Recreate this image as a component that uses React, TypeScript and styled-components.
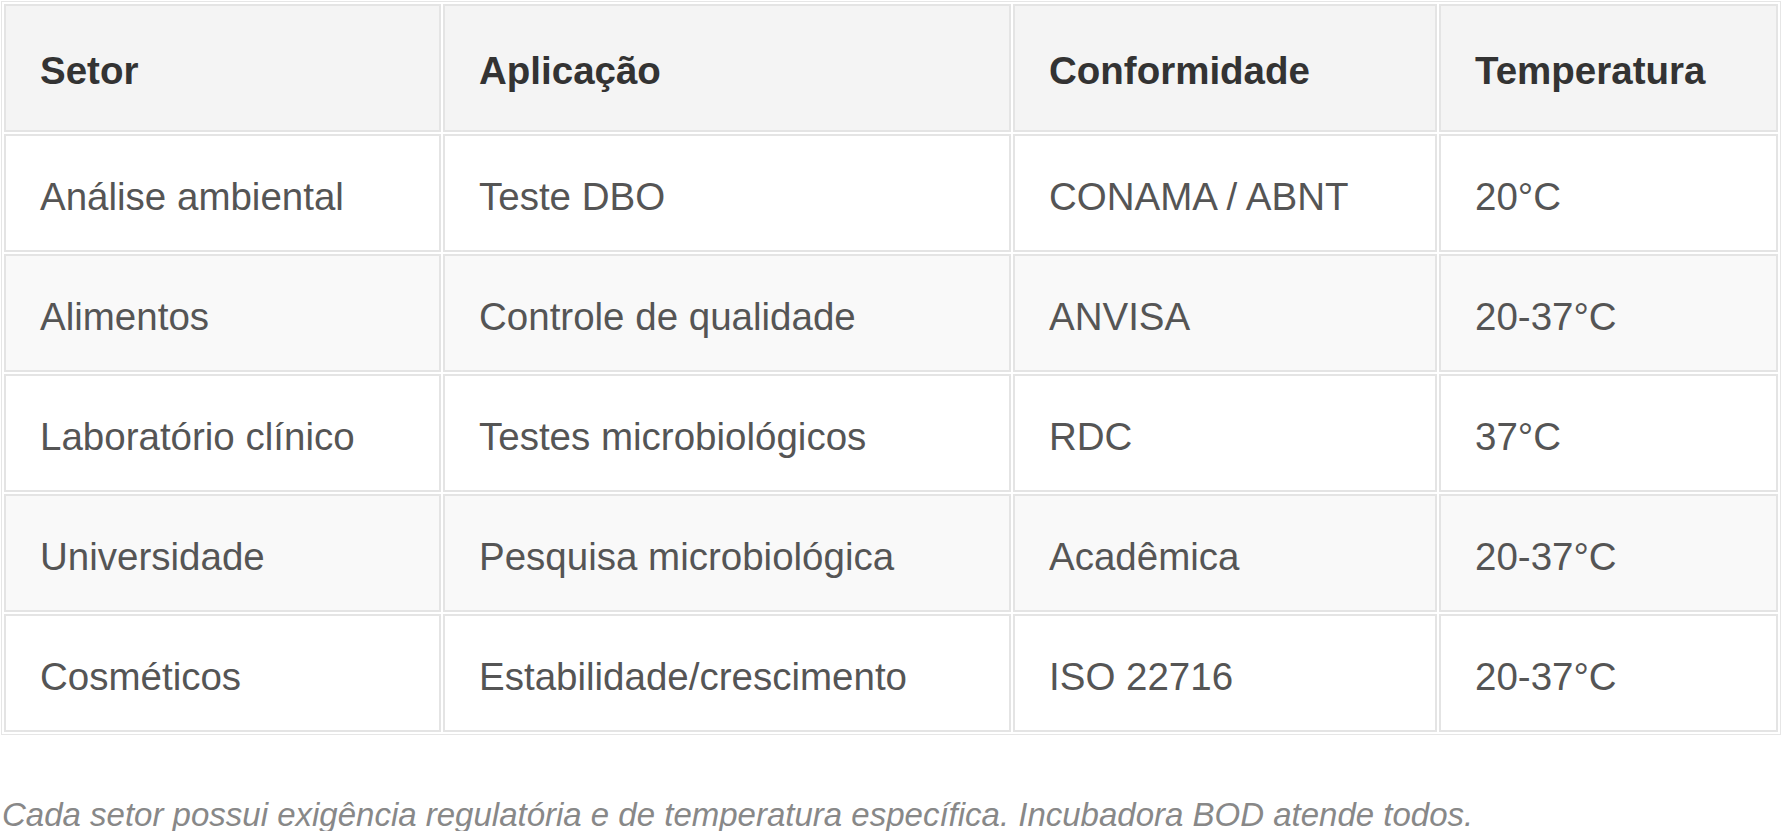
import React, { ReactElement } from 'react';
import styled, { createGlobalStyle } from 'styled-components';

const GlobalStyle = createGlobalStyle`
  html, body {
    margin: 0;
    padding: 0;
    background: #ffffff;
    font-family: "Liberation Sans", Arial, sans-serif;
  }
`;

const Wrapper = styled.div`
  display: flex;
  flex-direction: column;
  width: 100%;
  padding: 1px 1px 0 1px;
  box-sizing: border-box;
`;

const Table = styled.table`
  width: 100%;
  table-layout: fixed;
  border-collapse: separate;
  border-spacing: 2px;
  border: 1px solid #e6e6e6;
  background: #ffffff;
`;

const HeadCell = styled.th`
  background: #f4f4f4;
  color: #333333;
  font-size: 38.5px;
  font-weight: 700;
  line-height: 46px;
  text-align: left;
  padding: 42px 34px 36px 34px;
  border: 2px solid #e4e4e4;
  white-space: nowrap;
`;

const Row = styled.tr<{ $striped: boolean }>`
  background: ${(p) => (p.$striped ? '#f9f9f9' : '#ffffff')};
`;

const Cell = styled.td`
  color: #555555;
  font-size: 38.5px;
  line-height: 46px;
  padding: 38px 34px 30px 34px;
  border: 2px solid #e4e4e4;
  white-space: nowrap;
`;

const Note = styled.p`
  margin: 60px 0 0 1px;
  color: #888888;
  font-size: 33px;
  font-style: italic;
  line-height: 40px;
`;

const widths = [437, 568, 424, 339];

const headers = ['Setor', 'Aplicação', 'Conformidade', 'Temperatura'];

const rows = [
  ['Análise ambiental', 'Teste DBO', 'CONAMA / ABNT', '20°C'],
  ['Alimentos', 'Controle de qualidade', 'ANVISA', '20-37°C'],
  ['Laboratório clínico', 'Testes microbiológicos', 'RDC', '37°C'],
  ['Universidade', 'Pesquisa microbiológica', 'Acadêmica', '20-37°C'],
  ['Cosméticos', 'Estabilidade/crescimento', 'ISO 22716', '20-37°C'],
];

function App(): ReactElement {
  return (
    <Wrapper>
      <GlobalStyle />
      <Table>
        <colgroup>
          {widths.map((w, i) => (
            <col key={i} style={{ width: w }} />
          ))}
        </colgroup>
        <thead>
          <tr>
            {headers.map((h) => (
              <HeadCell key={h}>{h}</HeadCell>
            ))}
          </tr>
        </thead>
        <tbody>
          {rows.map((r, i) => (
            <Row key={r[0]} $striped={i % 2 === 1}>
              {r.map((c, j) => (
                <Cell key={j}>{c}</Cell>
              ))}
            </Row>
          ))}
        </tbody>
      </Table>
      <Note>
        Cada setor possui exigência regulatória e de temperatura específica. Incubadora BOD atende todos.
      </Note>
    </Wrapper>
  );
}

export default App;
